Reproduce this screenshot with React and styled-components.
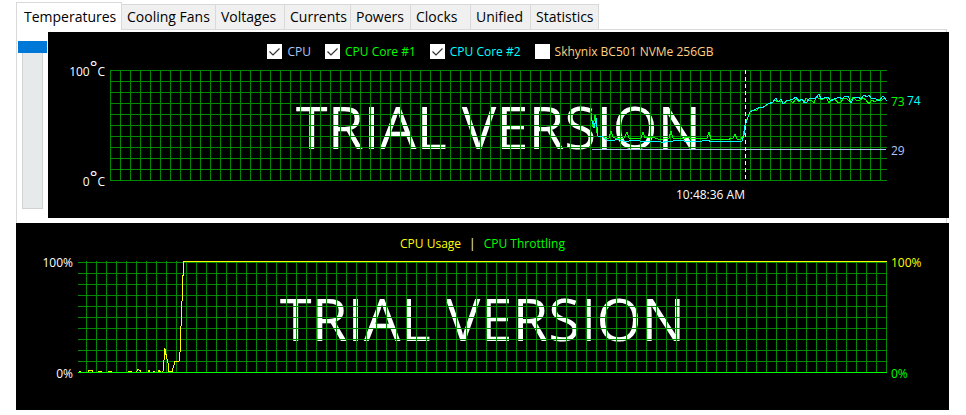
import React, { useState } from "react"
import styled, { createGlobalStyle, css } from "styled-components"

const GlobalStyle = createGlobalStyle`
  * {
    box-sizing: border-box;
  }
  body {
    margin: 0;
    background: #fff;
    font-family: "Open Sans", "Noto Sans", sans-serif;
  }
`

const colors = {
  cpu: "#b0c4f8",
  core1: "#00ff00",
  core2: "#00ffff",
  disk: "#ffd080",
  usage: "#ffff00",
  grid: "#008a00",
  line: "#d9d9d9",
}

const Page = styled.main`
  padding: 2px 17px 5px 16px;
`

const TabList = styled.div`
  display: flex;
  align-items: flex-end;
  height: 28px;
  box-shadow: inset 0 -1px ${colors.line};
  margin-right: 2px;
`

const Tab = styled.button`
  flex: 0 0 auto;
  width: ${({ $width }) => $width}px;
  height: 26px;
  padding: 0 0 0 5px;
  border: 1px solid ${colors.line};
  border-left: 0;
  background: #f0f0f0;
  color: #000;
  font-family: inherit;
  font-size: 14px;
  line-height: 24px;
  text-align: left;
  white-space: nowrap;
  ${({ $active }) =>
    $active &&
    css`
      height: 28px;
      padding-left: 7px;
      border-left: 1px solid ${colors.line};
      border-bottom: 0;
      background: #fff;
    `}
`

const TabPanel = styled.section`
  display: flex;
  gap: 1px;
  margin-right: 2px;
  padding: 2px 0 5px 1px;
  border: 1px solid ${colors.line};
  border-width: 0 1px 0 1px;
`

const Scale = styled.input`
  flex: none;
  appearance: none;
  writing-mode: vertical-lr;
  width: 29px;
  height: 168px;
  margin: 9px 0 0;
  background: transparent;
  &::-webkit-slider-runnable-track {
    width: 21px;
    height: 168px;
    border: 1px solid #d0d3d3;
    background: #e6eaea;
  }
  &::-webkit-slider-thumb {
    appearance: none;
    width: 29px;
    height: 12px;
    margin: -1px 0 0 -5px;
    background: #0078d7;
  }
`

const Monitor = styled.div`
  flex: 1;
  display: grid;
  grid-template-columns: 62px 1fr 62px;
  background: #000;
  color: #fff;
  font-size: 12px;
  line-height: 16px;
`

const TemperatureMonitor = styled(Monitor)`
  margin-right: -3px;
  grid-template-rows: 38px 111px 37px;
`

const UsageMonitor = styled(Monitor)`
  grid-template-rows: 38px 112px 37px;
`

const Legend = styled.div`
  grid-column: 1 / -1;
  display: flex;
  justify-content: center;
  gap: 14px;
  padding: 12px 16px 0 0;
`

const Sensor = styled.label`
  display: flex;
  gap: 5px;
  color: ${({ $color }) => $color};
  white-space: nowrap;
`

const Check = styled.input`
  appearance: none;
  flex: none;
  width: 15px;
  height: 15px;
  margin: 0;
  background: #fff;
`

const CheckBox = styled.span`
  display: grid;
  > * {
    grid-area: 1 / 1;
  }
  svg {
    pointer-events: none;
    visibility: hidden;
  }
  input:checked + svg {
    visibility: visible;
  }
`

const UsageLegend = styled.div`
  grid-column: 1 / -1;
  display: flex;
  justify-content: center;
  gap: 8px;
  padding-top: 13px;
`

const Key = styled.span`
  color: ${({ $color }) => $color};
`

const Axis = styled.div`
  display: flex;
  flex-direction: column;
  justify-content: space-between;
  align-items: flex-end;
  margin: -6px 0 -9px;
  padding-right: 5px;
`

const Degree = styled.sup`
  font-size: 18px;
  line-height: 0;
  vertical-align: 2px;
`

const Values = styled.div`
  position: relative;
`

const Value = styled.span`
  position: absolute;
  left: ${({ $column }) => 4 + $column * 16}px;
  color: ${({ $color }) => $color};
  transform: translateY(-50%);
`

// watermark, grid and traces share one cell so they stack in source order
const Plot = styled.div`
  display: grid;
  min-width: 0;
  > * {
    grid-area: 1 / 1;
  }
`

const Watermark = styled.div`
  align-self: center;
  padding-top: 3px;
  color: #fff;
  font-size: 58px;
  line-height: 80px;
  text-align: center;
  white-space: nowrap;
`

const Grid = styled.div`
  background-image: linear-gradient(to right, ${colors.grid} 1px, transparent 1px),
    linear-gradient(${colors.grid} 1px, transparent 1px);
  background-size: 10px 11px;
  background-position: ${({ $origin }) => $origin};
`

const Traces = styled.svg`
  display: block;
  width: 100%;
  height: 100%;
  fill: none;
  overflow: visible;
  shape-rendering: crispEdges;
`

const TimeRow = styled.div`
  grid-column: 2;
  padding-top: 6px;
`

const Time = styled.div`
  text-align: right;
`

const tabs = [
  ["Temperatures", 106],
  ["Cooling Fans", 94],
  ["Voltages", 69],
  ["Currents", 66],
  ["Powers", 60],
  ["Clocks", 60],
  ["Unified", 60],
  ["Statistics", 68],
]

const sensors = [
  { name: "CPU", color: colors.cpu, on: true },
  { name: "CPU Core #1", color: colors.core1, on: true },
  { name: "CPU Core #2", color: colors.core2, on: true },
  { name: "Skhynix BC501 NVMe 256GB", color: colors.disk, on: false },
]

const TEMP_WIDTH = 777
const MARK_X = 635

const core1 =
  "481,43 483,57 485,45 487,63 488,66 493,66 496,69 499,68 501,61 503,67 507,69 514,68 517,62 519,68 525,69 531,68 533,62 535,68 542,67 548,69 553,69 559,68 561,61 563,68 572,69 577,67 583,69 597,68 599,62 601,69 610,69 616,70 623,68 625,64 627,69 631,69 633,66 635,57 636,52 640,42 643,40 647,40 649,37 654,37 658,34 662,33 665,30 668,32 671,31 674,34 677,31 680,30 683,33 686,29 689,32 692,29 694,33 696,28 699,31 701,30 704,33 706,27 710,29 713,29 716,27 719,33 722,29 725,29 728,33 731,32 734,28 737,29 740,32 743,27 746,30 750,30 753,28 756,30 759,34 762,30 765,32 768,29 771,31 774,28 777,31"
const core2 =
  "481,47 484,58 486,48 488,66 493,67 497,70 500,70 503,71 507,69 513,71 519,71 524,70 530,71 538,71 545,72 549,71 553,73 556,71 563,71 568,70 574,71 579,71 585,72 592,71 597,70 602,72 608,71 612,72 615,71 619,71 624,72 628,71 632,71 634,65 635,55 637,50 640,42 644,40 648,38 653,37 658,34 663,32 666,28 668,32 671,29 673,34 676,31 680,30 683,29 686,27 689,31 692,29 695,33 697,32 700,28 703,29 706,28 709,24 711,29 714,28 718,27 721,31 724,29 727,28 729,27 732,29 735,26 738,26 741,33 744,27 748,27 751,29 754,25 757,27 759,25 762,29 765,28 769,31 773,26 777,31"
const usage =
  "1,111 2,110 3,111 10,111 11,109 14,109 15,111 20,111 21,110 23,110 24,111 30,111 31,110 33,110 34,111 50,111 51,110 53,110 54,111 58,111 60,108 62,109 63,111 70,111 71,109 72,111 75,111 76,110 77,111 80,111 81,109 83,111 85,110 87,87 88,93 90,101 91,110 94,110 97,100 101,100 102,91 105,14 105,0 809,0"

const App = () => {
  const [active, setActive] = useState("Temperatures")

  return (
    <Page>
      <GlobalStyle />
      <TabList role="tablist">
        {tabs.map(([name, width]) => (
          <Tab
            key={name}
            role="tab"
            aria-selected={active === name}
            $active={active === name}
            $width={width}
            onClick={() => setActive(name)}
          >
            {name}
          </Tab>
        ))}
      </TabList>
      <TabPanel role="tabpanel">
        <Scale type="range" min="0" max="100" defaultValue="0" aria-label="Scale" />
        <TemperatureMonitor>
          <Legend>
            {sensors.map(({ name, color, on }) => (
              <Sensor key={name} $color={color}>
                <CheckBox>
                  <Check type="checkbox" defaultChecked={on} />
                  <svg width="15" height="15" fill="none" stroke="#333">
                    <path d="M2.5 7.5L6 11L12.5 4.5" strokeWidth="1.2" />
                  </svg>
                </CheckBox>
                {name}
              </Sensor>
            ))}
          </Legend>
          <Axis>
            <span>
              100<Degree>°</Degree>C
            </span>
            <span>
              0<Degree>°</Degree>C
            </span>
          </Axis>
          <Plot>
            <Watermark>TRIAL VERSION</Watermark>
            <Grid $origin="0 0" />
            <Traces viewBox={`0 0 ${TEMP_WIDTH} 111`} preserveAspectRatio="none">
              <path d="M482 79.5H776" stroke={colors.cpu} />
              <polyline points={core1} stroke={colors.core1} />
              <polyline points={core2} stroke={colors.core2} />
              <path d={`M${MARK_X}.5 0V111`} stroke="#fff" strokeDasharray="4 3" />
            </Traces>
          </Plot>
          <Values>
            <Value $color={colors.core1} $column={0} style={{ top: "29%" }}>
              73
            </Value>
            <Value $color={colors.core2} $column={1} style={{ top: "28%" }}>
              74
            </Value>
            <Value $color={colors.cpu} $column={0} style={{ top: "73%" }}>
              29
            </Value>
          </Values>
          <TimeRow>
            <Time style={{ width: `${(MARK_X / TEMP_WIDTH) * 100}%` }}>10:48:36 AM</Time>
          </TimeRow>
        </TemperatureMonitor>
      </TabPanel>
      <UsageMonitor>
        <UsageLegend>
          <Key $color={colors.usage}>CPU Usage</Key>
          <span>|</span>
          <Key $color={colors.core1}>CPU Throttling</Key>
        </UsageLegend>
        <Axis>
          <span>100%</span>
          <span>0%</span>
        </Axis>
        <Plot>
          <Watermark>TRIAL VERSION</Watermark>
          <Grid $origin="8px 1px" />
          <Traces viewBox="0 0 809 112" preserveAspectRatio="none">
            <polyline points={usage} stroke={colors.usage} transform="translate(0 .5)" />
            <path d="M0 111.5H809" stroke={colors.core1} />
          </Traces>
        </Plot>
        <Values>
          <Value $color={colors.usage} $column={0} style={{ top: "2%" }}>
            100%
          </Value>
          <Value $color={colors.core1} $column={0} style={{ top: "101%" }}>
            0%
          </Value>
        </Values>
      </UsageMonitor>
    </Page>
  )
}

export default App
